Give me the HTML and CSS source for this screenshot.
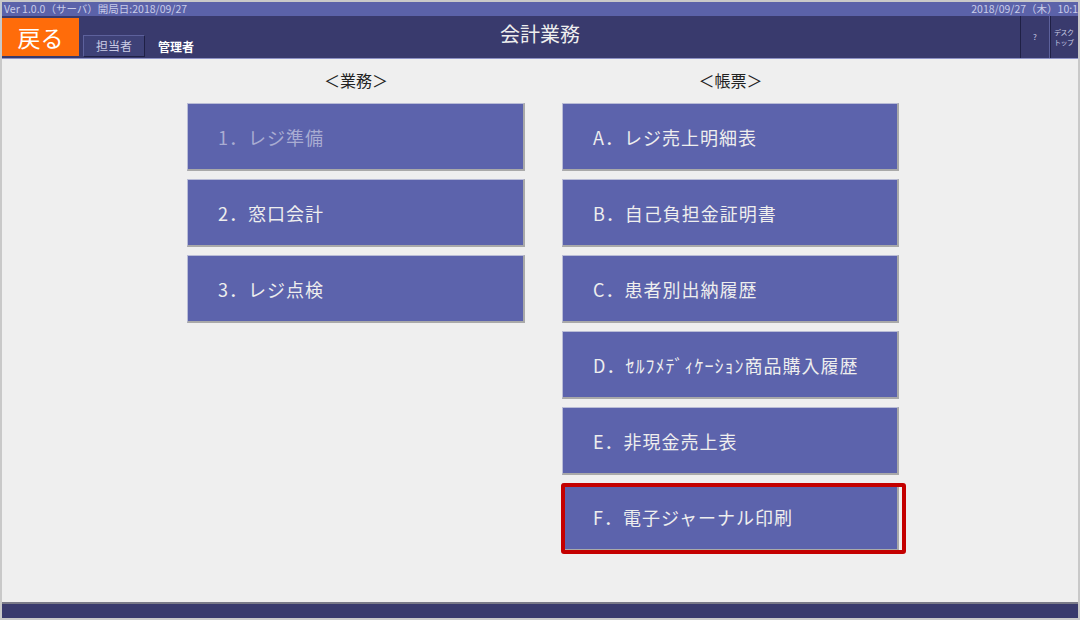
FILE: index.html
```html
<!DOCTYPE html>
<html lang="ja">
<head>
    <meta charset="UTF-8">
    <title>会計業務</title>
    <link rel="stylesheet" href="styles.css">
</head>
<body>
    <div class="frame">
        <div class="status-bar">
            <span>Ver 1.0.0（サーバ）開局日:2018/09/27</span>
            <span>2018/09/27（木）10:1</span>
        </div>
        <header class="header">
            <div class="header-left">
                <button class="back-btn">戻る</button>
                <span class="staff-btn">担当者</span>
                <span class="staff-name">管理者</span>
            </div>
            <h1 class="title">会計業務</h1>
            <div class="header-right">
                <span class="small-btn help">?</span>
                <span class="small-btn desk">デスク<br>トップ</span>
            </div>
        </header>

        <main class="main">
            <section class="column">
                <h2 class="column-title">＜業務＞</h2>
                <div class="menu-btn disabled">1．レジ準備</div>
                <div class="menu-btn">2．窓口会計</div>
                <div class="menu-btn">3．レジ点検</div>
            </section>
            <section class="column">
                <h2 class="column-title">＜帳票＞</h2>
                <div class="menu-btn">A．レジ売上明細表</div>
                <div class="menu-btn">B．自己負担金証明書</div>
                <div class="menu-btn">C．患者別出納履歴</div>
                <div class="menu-btn">D．ｾﾙﾌﾒﾃﾞｨｹｰｼｮﾝ商品購入履歴</div>
                <div class="menu-btn">E．非現金売上表</div>
                <div class="menu-btn selected">F．電子ジャーナル印刷</div>
            </section>
        </main>

        <footer class="footer"></footer>
    </div>
</body>
</html>
```

FILE: styles.css
```css
html, body {
    margin: 0;
    padding: 0;
    height: 100%;
}

body {
    font-family: "Noto Sans CJK JP", "Noto Sans", sans-serif;
    background-color: #cfcfcf;
}

.frame {
    box-sizing: border-box;
    height: 620px;
    border: 2px solid #c9c9c9;
    display: flex;
    flex-direction: column;
    background-color: #efefef;
}

/* barra de versao */
.status-bar {
    height: 14px;
    background-color: #5b62a9;
    color: #c9cce8;
    font-size: 10.5px;
    line-height: 14px;
    display: flex;
    justify-content: space-between;
    padding-left: 2px;
    white-space: nowrap;
    overflow: hidden;
}

.header {
    height: 42px;
    background-color: #393a6d;
    border-bottom: 1px solid #8e92c6;
    display: flex;
    position: relative;
}

.header-left {
    display: flex;
    align-items: flex-end;
    gap: 4px;
    flex: 1;
}

.back-btn {
    width: 77px;
    height: 38px;
    margin-bottom: 2px;
    border: none;
    background-color: #ff6c0a;
    color: #ffffff;
    font-family: inherit;
    font-size: 23px;
    line-height: 36px;
    padding: 0;
}

.staff-btn {
    box-sizing: border-box;
    width: 62px;
    height: 22px;
    margin-bottom: 1px;
    background-color: #3e4177;
    border: 1px solid #5d619c;
    border-right-color: #1f2045;
    border-bottom-color: #1f2045;
    color: #c9cbe4;
    font-size: 12px;
    line-height: 20px;
    text-align: center;
}

.staff-name {
    color: #ffffff;
    font-size: 12px;
    font-weight: bold;
    line-height: 22px;
    margin-left: 9px;
}

.title {
    position: absolute;
    left: 0;
    right: 0;
    top: 0;
    margin: 0;
    text-align: center;
    color: #eeeeee;
    font-size: 20px;
    font-weight: normal;
    line-height: 36px;
    pointer-events: none;
}

.header-right {
    display: flex;
}

.small-btn {
    box-sizing: border-box;
    width: 30px;
    height: 42px;
    border-left: 1px solid #1f2045;
    border-right: 1px solid #5d619c;
    color: #c9cbe4;
    font-size: 8px;
    display: flex;
    align-items: center;
    justify-content: center;
    line-height: 10px;
}

.small-btn.desk {
    width: 28px;
    border-right: none;
    justify-content: flex-start;
    padding-left: 3px;
    font-size: 7px;
    letter-spacing: -0.5px;
    white-space: nowrap;
    overflow: hidden;
}

.main {
    flex: 1;
    display: grid;
    grid-template-columns: 338px 337px;
    column-gap: 37px;
    align-content: start;
    padding-left: 185px;
    padding-top: 10px;
}

.column-title {
    margin: 0 0 12px 0;
    text-align: center;
    font-size: 16px;
    font-weight: normal;
    color: #222222;
    line-height: 22px;
}

.menu-btn {
    box-sizing: border-box;
    height: 68px;
    margin-bottom: 8px;
    background-color: #5c63ac;
    border-top: 1px solid #b9bcd6;
    border-left: 1px solid #b9bcd6;
    border-right: 2px solid #a9a9a9;
    border-bottom: 2px solid #a9a9a9;
    color: #eeeeee;
    font-size: 18px;
    letter-spacing: 1px;
    padding-left: 30px;
    display: flex;
    align-items: center;
    position: relative;
}

.menu-btn.disabled {
    color: #a9acd2;
}

.menu-btn.selected::after {
    content: "";
    position: absolute;
    top: -1px;
    left: -2px;
    right: -9px;
    bottom: -5px;
    border: 4px solid #c40000;
    border-radius: 3px;
}

.footer {
    height: 14px;
    border-top: 2px solid #7a7a88;
    background-color: #393a6d;
}
```
